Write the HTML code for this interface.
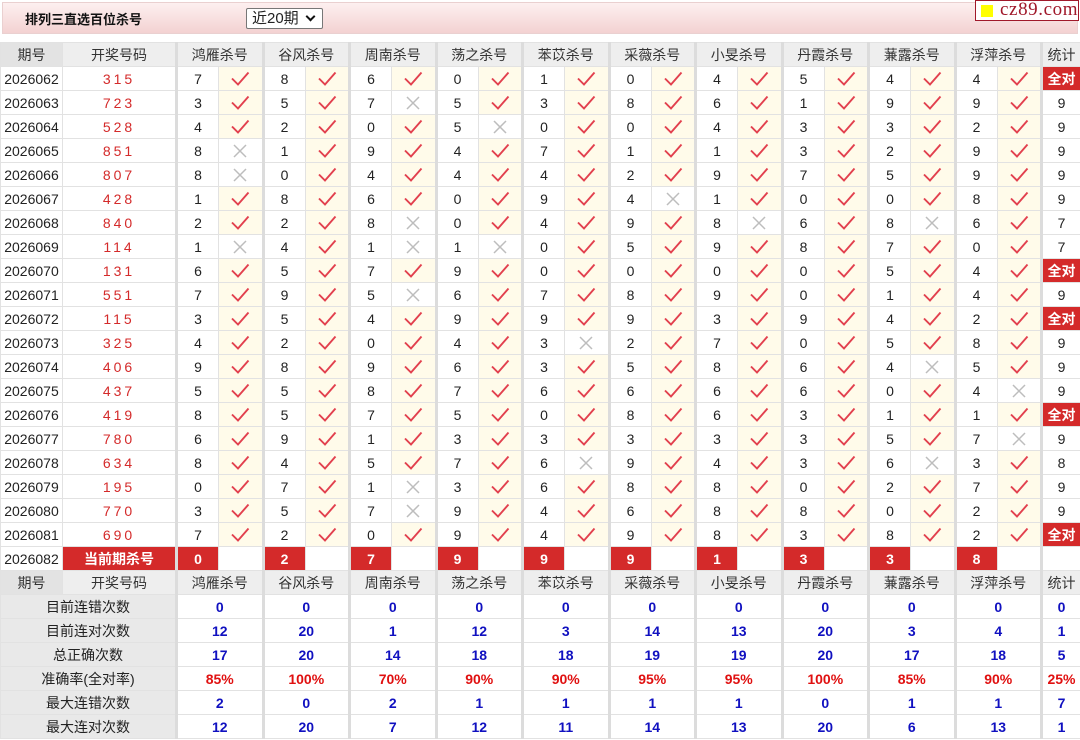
<!DOCTYPE html>
<html><head><meta charset="utf-8"><style>
body{margin:0;width:1080px;height:740px;overflow:hidden;background:#fff;font-family:"Liberation Sans","Noto Sans CJK SC",sans-serif;font-size:14px;color:#222}
.top{position:absolute;left:2px;top:2px;width:1076px;height:32px;background:linear-gradient(#fdf0f0,#f3d2d2);border:1px solid #ead0d0;box-sizing:border-box}
.title{position:absolute;left:22px;top:6px;font-weight:bold;font-size:13px;color:#111}
.sel{position:absolute;left:243px;top:5px;width:77px;height:21px;border:1px solid #777;background:#fff;box-sizing:border-box;font-size:15px;line-height:19px;padding-left:5px;border-radius:2px}
.sel:after{content:"";position:absolute;right:8px;top:4px;width:5px;height:5px;border-right:2px solid #111;border-bottom:2px solid #111;transform:rotate(45deg)}
.logo{position:absolute;left:975px;top:0px;width:104px;height:21px;border:1px solid #a0182a;background:#fff;box-sizing:border-box;font-family:"Liberation Serif",serif;font-size:19px;color:#a0182a;line-height:18px;padding-left:24px;letter-spacing:0.6px}
.logo:before{content:"";position:absolute;left:5px;top:4px;width:12px;height:12px;background:#ff0}
table{position:absolute;left:0;top:42px;width:1080px;border-collapse:collapse;table-layout:fixed}
td{border:1px solid #e2e2e2;padding:0;height:23px;text-align:center;line-height:22px;white-space:nowrap;overflow:hidden}
tr{height:24px}
.h td{background:#eee;color:#333}
.h td.q{background:#e3e3e3}
.k{color:#d42a2a;letter-spacing:3px}
.n{border-left:3px solid #dcdcdc}
.o{background:#fffbea}
svg{display:block;margin:0 auto}
.all{background:#d42a2a;color:#fff;font-weight:bold;}
.st td{font-weight:bold;color:#1010c0}
.st td.l{background:#e9e9e9;color:#222;font-weight:normal}
.r td{color:#e01010}
</style></head><body>
<svg width="0" height="0" style="position:absolute"><defs>
<symbol id="c" viewBox="0 0 20 16"><path d="M2 7.5 L8 13.5 L18.5 1.5" fill="none" stroke="#e2404e" stroke-width="1.9"/></symbol>
<symbol id="x" viewBox="0 0 16 16"><path d="M2 2 L14 14 M14 2 L2 14" fill="none" stroke="#bdbdbd" stroke-width="1.5"/></symbol>
</defs></svg>
<div class="top"><div class="title">排列三直选百位杀号</div><div class="sel">近20期</div></div>
<div class="logo">cz89.com</div>
<table id="t">
<colgroup><col style="width:62px"><col style="width:114px">
<col style="width:42px"><col style="width:44.5px"><col style="width:42px"><col style="width:44.5px"><col style="width:42px"><col style="width:44.5px"><col style="width:42px"><col style="width:44.5px"><col style="width:42px"><col style="width:44.5px"><col style="width:42px"><col style="width:44.5px"><col style="width:42px"><col style="width:44.5px"><col style="width:42px"><col style="width:44.5px"><col style="width:42px"><col style="width:44.5px"><col style="width:42px"><col style="width:44.5px"><col style="width:39px"></colgroup>
<tr class="h"><td class="q">期号</td><td>开奖号码</td><td colspan="2" class="n">鸿雁杀号</td><td colspan="2" class="n">谷风杀号</td><td colspan="2" class="n">周南杀号</td><td colspan="2" class="n">荡之杀号</td><td colspan="2" class="n">苯苡杀号</td><td colspan="2" class="n">采薇杀号</td><td colspan="2" class="n">小旻杀号</td><td colspan="2" class="n">丹霞杀号</td><td colspan="2" class="n">蒹露杀号</td><td colspan="2" class="n">浮萍杀号</td><td class="n">统计</td></tr>
</table>
<script>
var D=[
["2026062","315","7o8o6o0o1o0o4o5o4o4o","全对"],
["2026063","723","3o5o7x5o3o8o6o1o9o9o","9"],
["2026064","528","4o2o0o5x0o0o4o3o3o2o","9"],
["2026065","851","8x1o9o4o7o1o1o3o2o9o","9"],
["2026066","807","8x0o4o4o4o2o9o7o5o9o","9"],
["2026067","428","1o8o6o0o9o4x1o0o0o8o","9"],
["2026068","840","2o2o8x0o4o9o8x6o8x6o","7"],
["2026069","114","1x4o1x1x0o5o9o8o7o0o","7"],
["2026070","131","6o5o7o9o0o0o0o0o5o4o","全对"],
["2026071","551","7o9o5x6o7o8o9o0o1o4o","9"],
["2026072","115","3o5o4o9o9o9o3o9o4o2o","全对"],
["2026073","325","4o2o0o4o3x2o7o0o5o8o","9"],
["2026074","406","9o8o9o6o3o5o8o6o4x5o","9"],
["2026075","437","5o5o8o7o6o6o6o6o0o4x","9"],
["2026076","419","8o5o7o5o0o8o6o3o1o1o","全对"],
["2026077","780","6o9o1o3o3o3o3o3o5o7x","9"],
["2026078","634","8o4o5o7o6x9o4o3o6x3o","8"],
["2026079","195","0o7o1x3o6o8o8o0o2o7o","9"],
["2026080","770","3o5o7x9o4o6o8o8o0o2o","9"],
["2026081","690","7o2o0o9o4o9o8o3o8o2o","全对"]];
var h='';
D.forEach(function(r){h+='<tr><td>'+r[0]+'</td><td class="k">'+r[1]+'</td>';
for(var i=0;i<10;i++){var n=r[2][i*2],s=r[2][i*2+1];h+='<td class="n">'+n+'</td>'+(s=='o'?'<td class="o"><svg width="20" height="16"><use href="#c"/></svg></td>':'<td><svg width="16" height="16"><use href="#x"/></svg></td>');}
h+=r[3]=='全对'?'<td class="n all">全对</td>':'<td class="n">'+r[3]+'</td>';h+='</tr>';});
h+='<tr><td>2026082</td><td class="all">当前期杀号</td>';
"0279991338".split('').forEach(function(c){h+='<td class="n all">'+c+'</td><td></td>';});
h+='<td class="n"></td></tr>';
h+='<tr class="h"><td class="q">期号</td><td>开奖号码</td>';
["鸿雁","谷风","周南","荡之","苯苡","采薇","小旻","丹霞","蒹露","浮萍"].forEach(function(c){h+='<td colspan="2" class="n">'+c+'杀号</td>';});
h+='<td class="n">统计</td></tr>';
var S=[["目前连错次数","0 0 0 0 0 0 0 0 0 0 0"],["目前连对次数","12 20 1 12 3 14 13 20 3 4 1"],["总正确次数","17 20 14 18 18 19 19 20 17 18 5"],["准确率(全对率)","85% 100% 70% 90% 90% 95% 95% 100% 85% 90% 25%"],["最大连错次数","2 0 2 1 1 1 1 0 1 1 7"],["最大连对次数","12 20 7 12 11 14 13 20 6 13 1"]];
S.forEach(function(s,j){h+='<tr class="st'+(j==3?' r':'')+'"><td colspan="2" class="l">'+s[0]+'</td>';var v=s[1].split(' ');for(var i=0;i<10;i++)h+='<td colspan="2" class="n">'+v[i]+'</td>';h+='<td class="n">'+v[10]+'</td></tr>';});
document.getElementById('t').insertAdjacentHTML('beforeend',h);
</script>
</body></html>
